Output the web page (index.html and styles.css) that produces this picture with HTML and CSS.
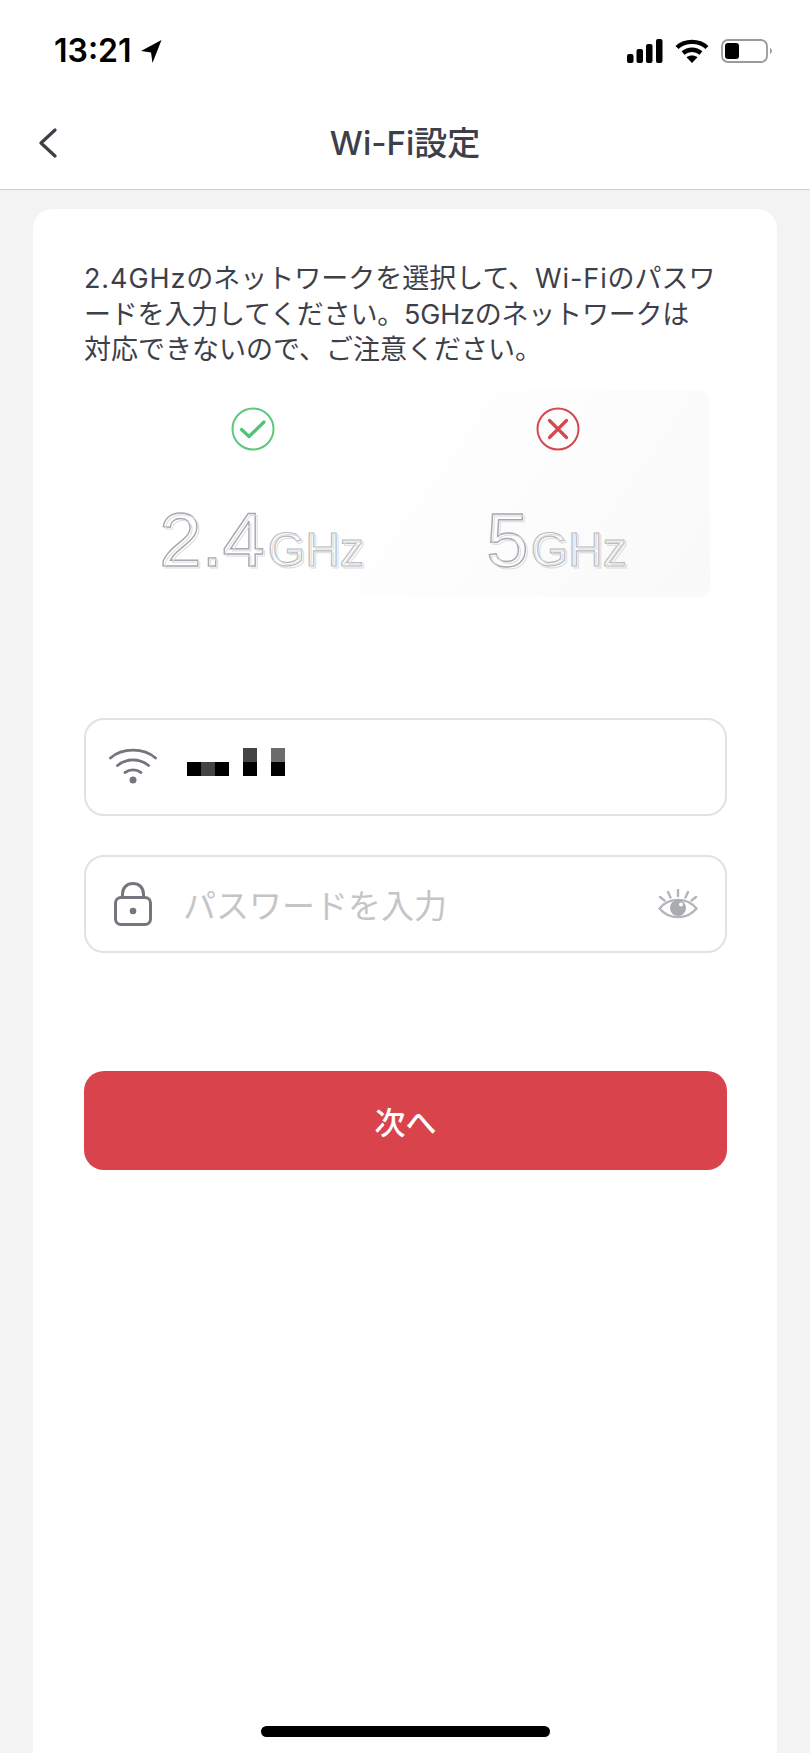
FILE: index.html
```html
<!DOCTYPE html>
<html lang="ja">
<head>
<meta charset="utf-8">
<title>Wi-Fi設定</title>
<link rel="stylesheet" href="styles.css">
</head>
<body>
<div class="page">
  <header class="top">
    <div class="status">
      <div class="time-wrap">
        <span class="time">13:21</span>
        <svg class="loc" viewBox="0 0 21 23"><path d="M20.500 0 0 11l10 1.500L11.500 23z" fill="#000"/></svg>
      </div>
      <div class="status-icons">
        <svg class="signal" viewBox="0 0 36 24"><rect x="0" y="15" width="6.500" height="9" rx="2"/><rect x="9.500" y="10" width="6.500" height="14" rx="2"/><rect x="19" y="5" width="6.500" height="19" rx="2"/><rect x="29" y="0" width="6.500" height="24" rx="2"/></svg>
        <svg class="wifi-s" viewBox="0 0 34 24"><path d="M2 8.500C10 1 24 1 32 8.500" fill="none" stroke="#000" stroke-width="4.400"/><path d="M8 14c5.200-4.400 12.800-4.400 18 0" fill="none" stroke="#000" stroke-width="4.400"/><path d="M17 24l-5.500-5.800c3-2.400 8-2.400 11 0z" fill="#000"/></svg>
        <svg class="battery" viewBox="0 0 52 24"><rect x="1" y="1" width="45" height="22" rx="6" fill="none" stroke="#9a9a9a" stroke-width="1.800"/><rect x="4" y="4" width="14" height="16" rx="3" fill="#000"/><path d="M49 9c2.500.8 2.500 5.200 0 6z" fill="#9a9a9a"/></svg>
      </div>
    </div>
    <nav class="nav">
      <svg class="back" viewBox="0 0 20 30"><path d="M17 2 3 15l14 13" fill="none" stroke="#3c3f48" stroke-width="3.200" stroke-linecap="round" stroke-linejoin="round"/></svg>
      <h1 class="title">Wi-Fi設定</h1>
    </nav>
  </header>
  <main class="card">
    <p class="desc"><span class="en">2.4GHz</span>のネットワークを選択して、<span class="en">Wi-Fi</span>のパスワ<br><span class="tight">ードを入力してください。5GHzのネットワークは</span><br>対応できないので、ご注意ください。</p>
    <section class="bands">
      <div class="band">
        <svg class="mark" viewBox="0 0 44 44"><circle cx="22" cy="22" r="20.500" fill="none" stroke="#5cc77f" stroke-width="2"/><path d="M10.500 22.500l7.500 7L33 15" fill="none" stroke="#4fc274" stroke-width="3.200" stroke-linecap="round" stroke-linejoin="round"/></svg>
        <div class="band-label label-24"><span class="big" data-t="2.4">2.4</span><span class="small" data-t="GHz">GHz</span></div>
      </div>
      <div class="band">
        <svg class="mark" viewBox="0 0 44 44"><circle cx="22" cy="22" r="20.500" fill="none" stroke="#d4484f" stroke-width="2"/><path d="M13.500 13.500l17 17M30.500 13.500l-17 17" fill="none" stroke="#d4484f" stroke-width="3.200" stroke-linecap="round"/></svg>
        <div class="band-label label-5"><span class="big" data-t="5">5</span><span class="small" data-t="GHz">GHz</span></div>
      </div>
    </section>
    <div class="field field-ssid">
      <svg class="ic-wifi" viewBox="0 0 48 38"><path d="M1.500 12C13 1.500 35 1.500 46.500 12" fill="none" stroke="#74767e" stroke-width="2.800" stroke-linecap="round"/><path d="M8.500 19.500c9-7.500 22-7.500 31 0" fill="none" stroke="#74767e" stroke-width="2.800" stroke-linecap="round"/><path d="M16 26.500c4.800-3.500 11.200-3.500 16 0" fill="none" stroke="#74767e" stroke-width="2.800" stroke-linecap="round"/><circle cx="24" cy="34" r="3.500" fill="#74767e"/></svg>
      <div class="mosaic">
        <i></i><i></i><i></i><i></i><i class="m-dark"></i><i></i><i class="m-mid"></i>
        <i class="m-k"></i><i class="m-dark"></i><i class="m-k"></i><i></i><i class="m-k"></i><i></i><i class="m-k"></i>
      </div>
    </div>
    <div class="field field-pass">
      <svg class="ic-lock" viewBox="0 0 38 44"><rect x="1.500" y="15.500" width="35" height="27" rx="5.500" fill="none" stroke="#74767e" stroke-width="3"/><path d="M8.500 15.500V12C8.500 5.500 13 1.500 19 1.500S29.500 5.500 29.500 12v3.500" fill="none" stroke="#74767e" stroke-width="3"/><circle cx="19" cy="29" r="3.300" fill="#74767e"/></svg>
      <span class="placeholder">パスワードを入力</span>
      <svg class="ic-eye" viewBox="0 0 40 30"><path d="M1.500 19.500C11 8 29 8 38.500 19.500 29 31 11 31 1.500 19.500z" fill="none" stroke="#b3b5ba" stroke-width="2.400"/><circle cx="20" cy="19" r="8" fill="#a9abb1"/><circle cx="23" cy="15.500" r="2" fill="#fff"/><path d="M20 1v6M10 3l2.500 5.500M30 3l-2.500 5.500M2 8l4.500 3.500M38 8l-4.500 3.500" fill="none" stroke="#b3b5ba" stroke-width="2.400" stroke-linecap="round"/></svg>
    </div>
    <button class="next" type="button">次へ</button>
  </main>
  <div class="home-bar"></div>
</div>
</body>
</html>
```

FILE: styles.css
```css
* { box-sizing: border-box; }
html, body { margin: 0; padding: 0; }
body {
  background: #f3f3f3;
  font-family: Inter, "Noto Sans CJK JP", sans-serif;
  color: #3d4049;
}
.page {
  position: relative;
  height: 1753px;
  overflow: hidden;
  display: flex;
  flex-direction: column;
}
.top {
  background: #fff;
  height: 190px;
  border-bottom: 1px solid #cfcfcf;
  flex: none;
}
.status {
  height: 104px;
  padding: 36px 37px 0 54px;
  display: flex;
  justify-content: space-between;
  align-items: flex-start;
}
.time-wrap { display: flex; align-items: center; gap: 9px; height: 30px; }
.time {
  font-size: 32px;
  font-weight: 600;
  color: #000;
  line-height: 30px;
}
.loc { width: 21px; height: 23px; }
.status-icons { display: flex; align-items: center; gap: 12px; height: 30px; }
.signal { width: 36px; height: 24px; fill: #000; }
.wifi-s { width: 34px; height: 24px; }
.battery { width: 52px; height: 24px; }
.nav {
  position: relative;
  height: 85px;
  display: flex;
  align-items: center;
  justify-content: center;
}
.back { position: absolute; left: 38px; top: 24px; width: 20px; height: 30px; }
.title {
  margin: 0 0 8px;
  font-size: 33px;
  line-height: 40px;
  font-weight: 500;
  color: #3d4049;
}
.card {
  flex: 1;
  margin: 19px 33px 0;
  padding: 52px 50px 0 51px;
  background: #fff;
  border-radius: 20px 20px 0 0;
}
.desc {
  margin: 0;
  font-size: 27px;
  line-height: 35.500px;
  color: #3d4049;
  white-space: nowrap;
}
.en { letter-spacing: 0.9px; }
.tight { letter-spacing: -0.2px; }
.bands {
  margin: 22px 17px 0 16px;
  height: 207px;
  display: grid;
  grid-template-columns: 1fr 1fr;
  border-radius: 10px;
  background: linear-gradient(125deg, #fff 42%, #f9f9f9 100%);
}
.band {
  display: flex;
  flex-direction: column;
  align-items: center;
  padding-top: 17px;
}
.mark { width: 44px; height: 44px; flex: none; }
.band-label {
  margin-top: 53px;
  display: flex;
  align-items: baseline;
  font-family: "Liberation Sans", Arial, sans-serif;
  line-height: 72px;
}
.label-24 { margin-left: 18px; gap: 3px; }
.label-5 { margin-left: -2px; gap: 2px; }
.big, .small {
  position: relative;
  color: transparent;
  -webkit-text-stroke: 1.400px #a6a8ad;
}
.big { font-size: 76px; }
.small { font-size: 48px; -webkit-text-stroke: 1.200px #b8babe; }
.big::after, .small::after {
  content: attr(data-t);
  position: absolute;
  left: 2px;
  top: 2px;
  -webkit-text-stroke: 1px #dcdde0;
  z-index: 0;
}
.field {
  height: 98px;
  border: 2px solid #e2e2e4;
  border-radius: 20px;
  display: flex;
  align-items: center;
}
.field-ssid { margin-top: 121px; padding-left: 23px; gap: 30px; }
.field-pass { margin-top: 39px; padding: 0 27px 0 28px; }
.ic-wifi { width: 48px; height: 38px; flex: none; margin-top: -4px; }
.mosaic {
  display: grid;
  grid-template-columns: repeat(7, 14px);
  grid-auto-rows: 14px;
  margin-top: -10px;
}
.m-k { background: #000; }
.m-dark { background: #444; }
.m-mid { background: #6c6c6c; }
.ic-lock { width: 38px; height: 44px; flex: none; }
.placeholder {
  margin-left: 31px;
  font-size: 33px;
  color: #c5c5c8;
  flex: 1;
}
.ic-eye { width: 40px; height: 30px; flex: none; }
.next {
  display: block;
  width: 100%;
  height: 99px;
  margin-top: 118px;
  border: 0;
  border-radius: 20px;
  background: #d9444c;
  color: #fff;
  font-family: "Noto Sans CJK JP", sans-serif;
  font-size: 31px;
  font-weight: 500;
}
.home-bar {
  position: absolute;
  left: 261px;
  top: 1726px;
  width: 289px;
  height: 11px;
  border-radius: 6px;
  background: #000;
}
```
